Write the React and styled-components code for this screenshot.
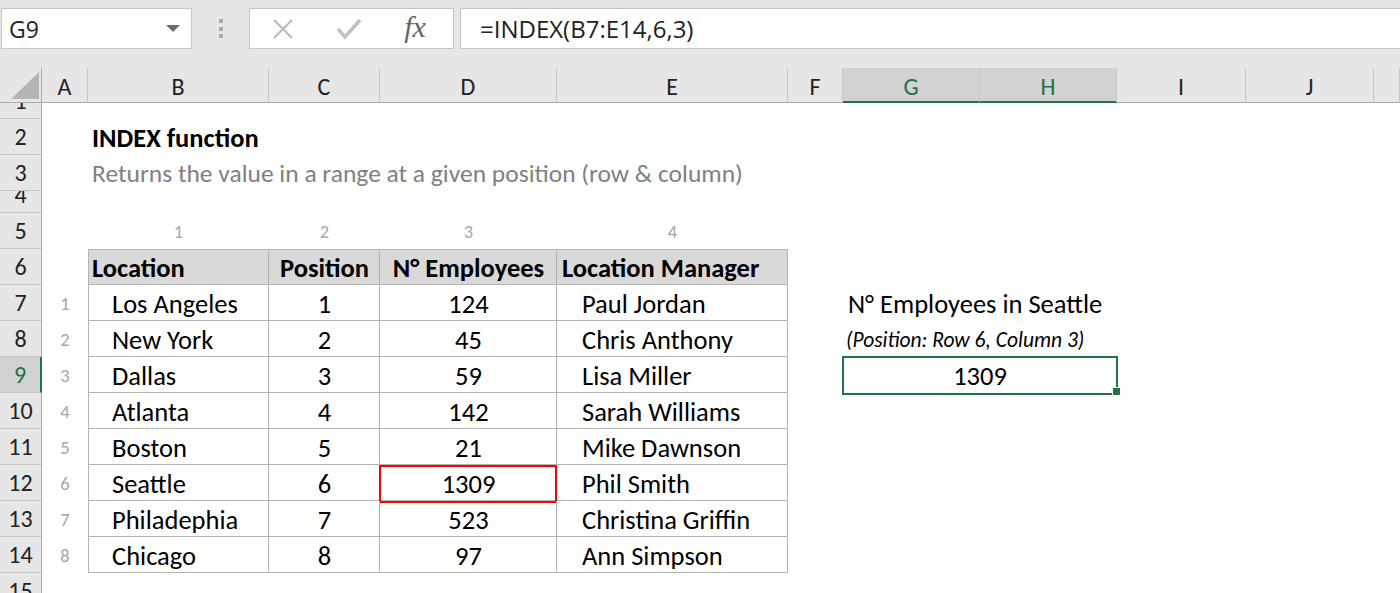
import styled, { createGlobalStyle } from 'styled-components';
import { Fragment } from 'react';

const GREEN = '#217346';
const GRID = '#b4b4b4';

const GlobalStyle = createGlobalStyle`
	html, body {
		margin: 0;
		padding: 0;
		background: #fff;
		overflow: hidden;
	}
	body {
		font-family: Calibri, Carlito, Lato, sans-serif;
		color: #000;
	}
`;

/* ---------- formula bar ---------- */

const FormulaBar = styled.div`
	display: flex;
	align-items: flex-start;
	height: 68px;
	padding-top: 8px;
	box-sizing: border-box;
	background: #e6e6e6;
	font-family: 'Segoe UI', 'Open Sans', sans-serif;
`;

const NameBox = styled.div`
	display: flex;
	align-items: center;
	justify-content: space-between;
	box-sizing: border-box;
	width: 191px;
	height: 41px;
	margin-left: 1px;
	padding: 0 11px 0 7px;
	background: #fff;
	border: 1px solid #c6c6c6;
	font-size: 23px;
	color: #222;
`;

const Grip = styled.div`
	display: flex;
	flex-direction: column;
	align-items: center;
	justify-content: center;
	gap: 3.5px;
	width: 57px;
	height: 41px;

	span {
		width: 4px;
		height: 4px;
		background: #a8a8a8;
	}
`;

const FxBox = styled.div`
	display: flex;
	box-sizing: border-box;
	width: 205px;
	height: 41px;
	background: #fff;
	border: 1px solid #c6c6c6;
`;

const FxSlot = styled.div`
	display: flex;
	align-items: center;
	justify-content: center;
	width: 66px;
`;

const FxLabel = styled.span`
	font-family: 'Liberation Serif', serif;
	font-style: italic;
	font-size: 30px;
	color: #666;
	margin-top: -3px;
`;

const FormulaInput = styled.div`
	flex: 1;
	display: flex;
	align-items: center;
	box-sizing: border-box;
	height: 41px;
	margin-left: 6px;
	padding-left: 19px;
	background: #fff;
	border: 1px solid #c6c6c6;
	border-right: none;
	font-size: 24px;
	color: #222;
`;

/* ---------- sheet ---------- */

const Sheet = styled.div`
	display: grid;
	grid-template-columns: 42px 46px 181px 111px 177px 231px 55px 137px 137px 129px 128px 1fr;
	grid-template-rows: 35px 16px 36px 36px 22px repeat(11, 36px);
`;

const Corner = styled.div`
	box-sizing: border-box;
	background: #e6e6e6;
	border-right: 1px solid #ababab;
	border-bottom: 1px solid #ababab;
`;

const ColHead = styled.div`
	display: flex;
	align-items: center;
	justify-content: center;
	box-sizing: border-box;
	padding-top: 3px;
	background: ${(p) => (p.$selected ? '#d2d2d2' : '#e6e6e6')};
	border-right: 1px solid #c6c6c6;
	border-bottom: ${(p) => (p.$selected ? `2px solid ${GREEN}` : '1px solid #ababab')};
	color: ${(p) => (p.$selected ? GREEN : '#222')};
	font-size: 24px;
`;

const RowHead = styled.div`
	display: flex;
	align-items: flex-end;
	justify-content: center;
	overflow: hidden;
	box-sizing: border-box;
	background: ${(p) => (p.$selected ? '#d2d2d2' : '#e6e6e6')};
	border-right: ${(p) => (p.$selected ? `2px solid ${GREEN}` : '1px solid #ababab')};
	border-bottom: 1px solid #c6c6c6;
	color: ${(p) => (p.$selected ? GREEN : '#222')};
	font-size: 24px;

	span {
		line-height: 34px;
		flex-shrink: 0;
	}
`;

const Blank = styled.div``;

const Cell = styled.div`
	position: relative;
	display: flex;
	align-items: flex-end;
	justify-content: ${(p) => (p.$center ? 'center' : 'flex-start')};
	min-width: 0;
	padding-left: ${(p) => (p.$center ? 0 : p.$indent ?? 4)}px;
	white-space: nowrap;
	font-size: ${(p) => p.$size || 26.5}px;
	line-height: 34px;
	font-weight: ${(p) => (p.$bold ? 700 : 400)};
	font-style: ${(p) => (p.$italic ? 'italic' : 'normal')};
	color: ${(p) => p.$color || '#000'};
`;

const IndexNum = styled(Cell).attrs({ $center: true, $size: 18.5, $color: '#a6a6a6' })``;

const TableCell = styled(Cell)`
	background: ${(p) => (p.$head ? '#d9d9d9' : 'transparent')};
	font-weight: ${(p) => (p.$head ? 700 : 400)};
	box-shadow: inset -1px -1px 0 ${GRID}
		${(p) => (p.$first ? `, inset 1px 0 0 ${GRID}` : '')}
		${(p) => (p.$head ? `, inset 0 1px 0 ${GRID}` : '')};

	${(p) =>
		p.$hl &&
		`
		&::after {
			content: '';
			position: absolute;
			top: 0;
			right: 0;
			bottom: -2px;
			left: -1px;
			border: 2px solid #ff0000;
		}
	`}
`;

const ResultCell = styled(Cell)`
	grid-column: span 2;
	justify-content: center;
	padding-left: 0;

	&::after {
		content: '';
		position: absolute;
		top: -1px;
		right: -1px;
		bottom: -2px;
		left: -1px;
		border: 2px solid ${GREEN};
	}

	&::before {
		content: '';
		position: absolute;
		right: -4px;
		bottom: -3px;
		width: 7px;
		height: 7px;
		background: ${GREEN};
		border: 1px solid #fff;
		z-index: 1;
	}
`;

const COLS = ['A', 'B', 'C', 'D', 'E', 'F', 'G', 'H', 'I', 'J', ''];

const data = [
	['Los Angeles', 1, 124, 'Paul Jordan'],
	['New York', 2, 45, 'Chris Anthony'],
	['Dallas', 3, 59, 'Lisa Miller'],
	['Atlanta', 4, 142, 'Sarah Williams'],
	['Boston', 5, 21, 'Mike Dawnson'],
	['Seattle', 6, 1309, 'Phil Smith'],
	['Philadephia', 7, 523, 'Christina Griffin'],
	['Chicago', 8, 97, 'Ann Simpson'],
];

const blanks = (count, key) =>
	Array.from({ length: count }, (_, i) => <Blank key={`${key}-${i}`} />);

const SheetRow = ({ n, selected, children }) => (
	<Fragment>
		<RowHead $selected={selected}>
			<span>{n}</span>
		</RowHead>
		{children}
	</Fragment>
);

const sideCells = (rowNo) => {
	if (rowNo === 7)
		return [
			<Cell key="g" $indent={5}>N° Employees in Seattle</Cell>,
			<Blank key="h" />,
		];
	if (rowNo === 8)
		return [
			<Cell key="g" $indent={3} $italic $size={21.5}>
				(Position: Row 6, Column 3)
			</Cell>,
			<Blank key="h" />,
		];
	if (rowNo === 9) return [<ResultCell key="gh">1309</ResultCell>];
	return blanks(2, 'gh');
};

const App = () => {
	return (
		<Fragment>
			<GlobalStyle />
			<FormulaBar>
				<NameBox>
					G9
					<svg width="14" height="8" viewBox="0 0 14 8">
						<polygon points="0,0 14,0 7,7" fill="#6d6d6d" />
					</svg>
				</NameBox>
				<Grip>
					<span />
					<span />
					<span />
				</Grip>
				<FxBox>
					<FxSlot>
						<svg width="22" height="20" viewBox="0 0 22 20">
							<path d="M2 1 L20 19 M20 1 L2 19" stroke="#b8b8b8" strokeWidth="2" fill="none" />
						</svg>
					</FxSlot>
					<FxSlot>
						<svg width="26" height="22" viewBox="0 0 26 22">
							<path d="M2 11 L9 19 L24 2" stroke="#c2c2c2" strokeWidth="3.6" fill="none" />
						</svg>
					</FxSlot>
					<FxSlot>
						<FxLabel>fx</FxLabel>
					</FxSlot>
				</FxBox>
				<FormulaInput>=INDEX(B7:E14,6,3)</FormulaInput>
			</FormulaBar>

			<Sheet>
				<Corner>
					<svg width="41" height="34" viewBox="0 0 41 34">
						<polygon points="39,4 39,31 11,31" fill="#b4b4b4" />
					</svg>
				</Corner>
				{COLS.map((c, i) => (
					<ColHead key={i} $selected={c === 'G' || c === 'H'}>
						{c}
					</ColHead>
				))}

				<SheetRow n={1}>{blanks(11, 'r1')}</SheetRow>

				<SheetRow n={2}>
					<Blank />
					<Cell $bold>INDEX function</Cell>
					{blanks(9, 'r2')}
				</SheetRow>

				<SheetRow n={3}>
					<Blank />
					<Cell $color="#808080" $size={25.5}>
						Returns the value in a range at a given position (row &amp; column)
					</Cell>
					{blanks(9, 'r3')}
				</SheetRow>

				<SheetRow n={4}>{blanks(11, 'r4')}</SheetRow>

				<SheetRow n={5}>
					<Blank />
					<IndexNum>1</IndexNum>
					<IndexNum>2</IndexNum>
					<IndexNum>3</IndexNum>
					<IndexNum>4</IndexNum>
					{blanks(6, 'r5')}
				</SheetRow>

				<SheetRow n={6}>
					<Blank />
					<TableCell $head $first>Location</TableCell>
					<TableCell $head $center>Position</TableCell>
					<TableCell $head $center>N° Employees</TableCell>
					<TableCell $head $indent={5}>Location Manager</TableCell>
					{blanks(6, 'r6')}
				</SheetRow>

				{data.map(([loc, pos, emp, mgr], i) => {
					const rowNo = i + 7;
					return (
						<SheetRow key={rowNo} n={rowNo} selected={rowNo === 9}>
							<IndexNum>{i + 1}</IndexNum>
							<TableCell $first $indent={24}>{loc}</TableCell>
							<TableCell $center>{pos}</TableCell>
							<TableCell $center $hl={loc === 'Seattle'}>{emp}</TableCell>
							<TableCell $indent={25}>{mgr}</TableCell>
							<Blank />
							{sideCells(rowNo)}
							{blanks(3, `r${rowNo}`)}
						</SheetRow>
					);
				})}

				<SheetRow n={15}>{blanks(11, 'r15')}</SheetRow>
			</Sheet>
		</Fragment>
	);
};

export default App;
